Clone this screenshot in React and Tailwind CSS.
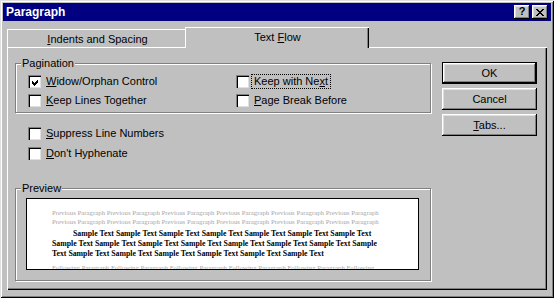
import React from "react";

const raised =
  "shadow-[inset_-1px_-1px_0_#000,inset_1px_1px_0_#fff,inset_-2px_-2px_0_#808080,inset_2px_2px_0_#dfdfdf]";
const etched =
  "border border-[#808080] shadow-[inset_1px_1px_0_#fff,1px_1px_0_#fff]";

const Check = ({ checked }) => (
  <span className="w-[13px] h-[13px] shrink-0 bg-white border-t border-l border-[#808080] border-r-white border-b-white shadow-[inset_1px_1px_0_#000,inset_-1px_-1px_0_#dfdfdf] flex items-center justify-center">
    {checked && (
      <svg width="7" height="7" viewBox="0 0 7 7" shapeRendering="crispEdges">
        <path d="M0 2 L2 4 L6 0 L6 3 L2 7 L0 5 Z" fill="#000" />
      </svg>
    )}
  </span>
);

// case à cocher avec son libellé, la lettre soulignée passée à part
const Option = ({ checked, pre, u, post, focus }) => (
  <div className="flex items-center gap-[5px] h-[13px]">
    <Check checked={checked} />
    <span
      className={
        focus
          ? "whitespace-nowrap leading-[13px] -mx-[3px] px-[2px] border border-dotted border-black"
          : "whitespace-nowrap leading-[13px]"
      }
    >
      {pre}
      <u>{u}</u>
      {post}
    </span>
  </div>
);

const Group = ({ label, className, children }) => (
  <div className={`relative ${etched} ${className}`}>
    <span className="absolute -top-[7px] left-[5px] bg-[#c0c0c0] px-[1px] leading-[13px]">
      {label}
    </span>
    {children}
  </div>
);

const Button = ({ children, def }) => (
  <button
    className={`h-[22px] w-full flex items-center justify-center bg-[#c0c0c0] ${raised} ${
      def ? "border border-black" : ""
    }`}
  >
    {children}
  </button>
);

const prev = "Previous Paragraph Previous Paragraph Previous Paragraph Previous Paragraph Previous Paragraph Previous Paragraph";
const follow = "Following Paragraph Following Paragraph Following Paragraph Following Paragraph Following Paragraph Following";

export default function App() {
  return (
    <div className="w-[554px] h-[298px] bg-[#c0c0c0] p-[3px] flex flex-col overflow-hidden text-black text-[11px] font-['Liberation_Sans',Arial,sans-serif] shadow-[inset_1px_1px_0_#dfdfdf,inset_-1px_-1px_0_#000,inset_2px_2px_0_#fff,inset_-2px_-2px_0_#808080]">
      {/* barre de titre */}
      <div className="h-[18px] shrink-0 bg-[#000080] flex items-center pl-[3px] pr-[3px]">
        <span className="text-white font-bold text-[12px] leading-none">Paragraph</span>
        <div className="ml-auto flex gap-[2px]">
          <div className={`w-[16px] h-[14px] bg-[#c0c0c0] ${raised} flex items-center justify-center font-bold text-[11px] leading-none pb-[1px]`}>
            ?
          </div>
          <div className={`w-[16px] h-[14px] bg-[#c0c0c0] ${raised} flex items-center justify-center`}>
            <svg width="8" height="7" viewBox="0 0 8 7" shapeRendering="crispEdges">
              <path d="M0 0h2v1h1v1h2v-1h1v-1h2v1h-1v1h-1v1h-1v1h1v1h1v1h1v1h-2v-1h-1v-1h-2v1h-1v1h-2v-1h1v-1h1v-1h1v-1h-1v-1h-1v-1h-1z" fill="#000" />
            </svg>
          </div>
        </div>
      </div>

      <div className="flex-1 flex flex-col pl-[4px] pr-[4px] pt-[6px] pb-[5px]">
        {/* onglets */}
        <div className="h-[20px] flex items-end relative z-10 shrink-0">
          <div className="w-[180px] h-[18px] border-l border-t border-white shadow-[inset_-1px_0_0_#000,inset_-2px_0_0_#808080] flex items-center justify-center pt-[2px]">
            <span>
              <u>I</u>ndents and Spacing
            </span>
          </div>
          <div className="-ml-[2px] w-[184px] h-[21px] -mb-px bg-[#c0c0c0] border-l border-t border-white shadow-[inset_-1px_0_0_#000,inset_-2px_0_0_#808080] flex items-center justify-center pb-[1px]">
            <span>
              Text <u>F</u>low
            </span>
          </div>
        </div>

        {/* panneau */}
        <div className="flex-1 flex border-l border-t border-white shadow-[inset_-1px_-1px_0_#000,inset_-2px_-2px_0_#808080] pl-[7px] pt-[14px]">
          <div className="w-[416px] mt-[1px] flex flex-col">
            <Group label="Pagination" className="h-[50px] pl-[12px] pt-[11px]">
              <div className="grid grid-cols-[208px_1fr] gap-y-[6px]">
                <Option checked pre="" u="W" post="idow/Orphan Control" />
                <Option pre="Keep with Ne" u="x" post="t" focus />
                <Option pre="" u="K" post="eep Lines Together" />
                <Option pre="" u="P" post="age Break Before" />
              </div>
            </Group>

            <div className="pl-[13px] mt-[14px] flex flex-col gap-[7px]">
              <Option pre="" u="S" post="uppress Line Numbers" />
              <Option pre="" u="D" post="on't Hyphenate" />
            </div>

            <Group label="Preview" className="mt-[28px] h-[93px] pl-[10px] pt-[9px]">
              <div className="w-[393px] h-[72px] bg-white border border-black overflow-hidden pl-[25px] pt-[9px] font-['Liberation_Serif','Times_New_Roman',serif] whitespace-nowrap">
                <div className="text-[#a8a8a8] text-[6.8px] leading-[9px]">
                  <div>{prev}</div>
                  <div>{prev}</div>
                </div>
                <div className="font-bold text-[7.8px] leading-[10px] mt-[3px]">
                  <div className="pl-[21px]">
                    Sample Text Sample Text Sample Text Sample Text Sample Text Sample Text Sample Text
                  </div>
                  <div>
                    Sample Text Sample Text Sample Text Sample Text Sample Text Sample Text Sample Text Sample
                  </div>
                  <div>
                    Text Sample Text Sample Text Sample Text Sample Text Sample Text Sample Text
                  </div>
                </div>
                <div className="text-[#a8a8a8] text-[6.8px] leading-[9px] mt-[4px]">{follow}</div>
              </div>
            </Group>
          </div>

          {/* boutons */}
          <div className="ml-[11px] w-[95px] flex flex-col gap-[4px]">
            <Button def>OK</Button>
            <Button>Cancel</Button>
            <Button>
              <span>
                <u>T</u>abs...
              </span>
            </Button>
          </div>
        </div>
      </div>
    </div>
  );
}
